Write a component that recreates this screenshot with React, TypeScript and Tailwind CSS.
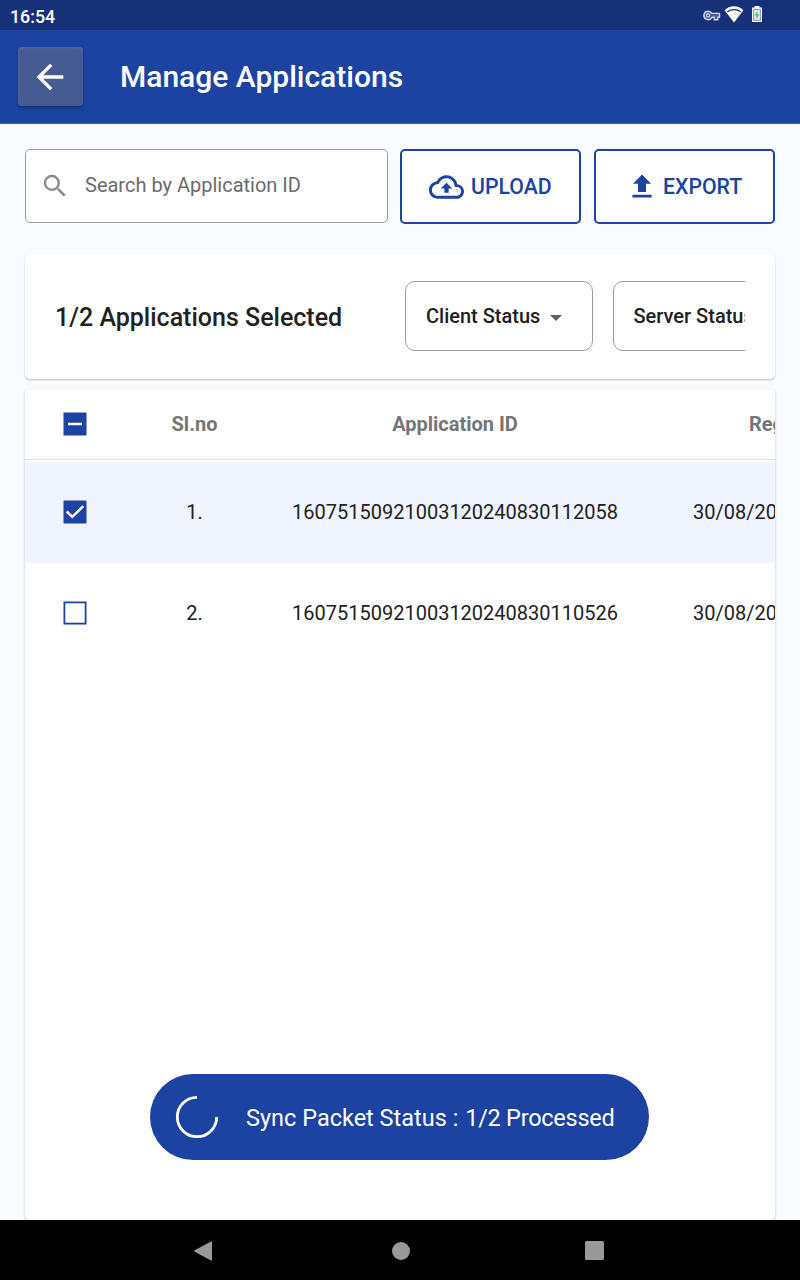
import type { ReactNode } from "react";

function StatusBar() {
  return (
    <div className="flex h-[30px] shrink-0 items-center justify-between bg-[#163178] pl-[10px] pr-[37px]">
      <span className="pt-[3px] text-[17.800px] font-medium leading-none text-white">16:54</span>
      <div className="flex h-[30px] items-start pt-[5px]">
        <svg width="18" height="12" viewBox="0 0 18 12" className="mt-[5px]">
          <path
            d="M5 1.200a4.200 4.200 0 1 0 3.900 6h2.300v2.500h3.600V7.200h1.700V3.400H8.900A4.200 4.200 0 0 0 5 1.200z"
            fill="#4a5e9a"
            stroke="#d0d6e8"
            strokeWidth="1.400"
            strokeLinejoin="round"
          />
          <circle cx="5" cy="5.400" r="1.500" fill="#163178" stroke="#e6eaf4" strokeWidth="1.100" />
        </svg>
        <svg width="20" height="18" viewBox="0 0 20 18" className="ml-[3px]">
          <path d="M10 17.400.6 5.200C3.200 2.700 6.400 1.200 10 1.200s6.800 1.500 9.400 4z" fill="#fff" />
          <path d="M3.300 6.900C5.200 5.400 7.500 4.600 10 4.600s4.800.8 6.700 2.300" fill="none" stroke="#163178" strokeWidth="1.300" />
        </svg>
        <svg width="12" height="18" viewBox="0 0 12 18" className="ml-[7px]">
          <path d="M3.500 1h5v1.500H11V17H1V2.500h2.500z" fill="#fff" />
          <rect x="2.600" y="4.300" width="6.800" height="11" fill="#dfe9ee" stroke="#7f8db5" strokeWidth=".9" />
          <path d="M6.800 5.500 3.400 10.400h2.200l-.5 4.200L8.600 9.300H6.400z" fill="#2edb62" />
        </svg>
      </div>
    </div>
  );
}

function Header() {
  return (
    <header className="flex h-[94px] shrink-0 items-center border-b border-[#3f60b0] bg-[#1c43a1] pl-[17.500px]">
      <button className="flex h-[59px] w-[65px] items-center justify-center rounded-[4px] bg-[#465b92] pr-[1px] shadow-[0_2px_3px_rgba(0,0,0,0.28),inset_0_2px_3px_rgba(80,105,175,0.8)]">
        <svg width="40" height="40" viewBox="0 0 24 24" fill="#fff">
          <path d="M20 11H7.830l5.590-5.590L12 4l-8 8 8 8 1.410-1.410L7.830 13H20v-2z" />
        </svg>
      </button>
      <h1 className="ml-[37.500px] text-[30px] font-medium leading-none text-white">Manage Applications</h1>
    </header>
  );
}

function ActionButton({ icon, label, className }: { icon: ReactNode; label: string; className: string }) {
  return (
    <button
      className={`flex h-[75px] w-[181px] items-center rounded-[5px] border-2 border-[#1c43a1] bg-white text-[21.250px] font-medium leading-none text-[#1c43a1] ${className}`}
    >
      {icon}
      <span className="whitespace-nowrap">{label}</span>
    </button>
  );
}

function Toolbar() {
  return (
    <div className="flex items-start">
      <div className="flex h-[73.500px] w-[363px] items-center rounded-[5px] border-[1.500px] border-[#9e9e9e] bg-white pl-[14px]">
        <svg width="30" height="30" viewBox="0 0 24 24" fill="#8c8c8c">
          <path d="M15.500 14h-.79l-.28-.27A6.471 6.471 0 0 0 16 9.500 6.500 6.500 0 1 0 9.500 16c1.610 0 3.090-.59 4.230-1.570l.27.28v.79l5 4.990L20.490 19l-4.990-5zm-6 0C7.010 14 5 11.990 5 9.500S7.010 5 9.500 5 14 7.010 14 9.500 11.990 14 9.500 14z" />
        </svg>
        <span className="ml-[15px] pb-[2px] text-[20px] leading-none text-[#6b6b6b]">Search by Application ID</span>
      </div>
      <ActionButton
        className="ml-[12px] gap-[7px] pl-[27px]"
        label="UPLOAD"
        icon={
          <svg width="35" height="24" viewBox="0 4 24 16" fill="#1c43a1">
            <path d="M19.350 10.040A7.490 7.490 0 0 0 12 4C9.110 4 6.600 5.640 5.350 8.040A5.994 5.994 0 0 0 0 14c0 3.310 2.690 6 6 6h13c2.760 0 5-2.240 5-5 0-2.640-2.050-4.780-4.650-4.960zM19 18H6c-2.210 0-4-1.790-4-4 0-2.050 1.530-3.760 3.560-3.970l1.070-.11.5-.95A5.469 5.469 0 0 1 12 6c2.620 0 4.880 1.860 5.390 4.430l.3 1.500 1.530.11A2.980 2.980 0 0 1 22 15c0 1.650-1.350 3-3 3z" />
            <path d="M8 13h2.550v3h2.900v-3H16l-4-4z" />
          </svg>
        }
      />
      <ActionButton
        className="ml-[13px] gap-[11px] pl-[36px]"
        label="EXPORT"
        icon={
          <svg width="20" height="24" viewBox="0 0 20 24" fill="#1c43a1" className="mb-[2px]">
            <path d="M10 .5 19 9.700h-5V18H6V9.700H1zM.4 20.800h19.200v2.700H.4z" />
          </svg>
        }
      />
    </div>
  );
}

function FilterButton({ label }: { label: string }) {
  return (
    <button className="flex h-[70px] w-[188px] shrink-0 items-center rounded-[10px] border border-[#9b9b9b] bg-white pl-[20px] text-[20px] font-medium leading-none text-[#212121]">
      <span className="whitespace-nowrap pb-[1px]">{label}</span>
      <svg width="12" height="6" viewBox="0 0 12 6" fill="#616161" className="ml-[10px] mt-[4px]">
        <path d="M0 0h12L6 6z" />
      </svg>
    </button>
  );
}

function SelectionCard() {
  return (
    <section className="mt-[30px] flex h-[125px] items-center rounded-[5px] bg-white pr-[30px] shadow-[0_1px_2px_rgba(0,0,0,0.25)]">
      <h2 className="w-[380px] shrink-0 pl-[30px] pt-[2px] text-[25px] font-medium leading-none text-[#212121]">
        1/2 Applications Selected
      </h2>
      <div className="flex min-w-0 flex-1 gap-[19.500px] overflow-hidden pb-[1px]">
        <FilterButton label="Client Status" />
        <FilterButton label="Server Status" />
      </div>
    </section>
  );
}

function Checkbox({ state }: { state: "mixed" | "on" | "off" }) {
  return (
    <svg width="24" height="24" viewBox="0 0 24 24">
      {state === "off" ? (
        <rect x="1.400" y="1.400" width="21.200" height="21.200" fill="#fff" stroke="#1c43a1" strokeWidth="1.800" />
      ) : (
        <rect x=".5" y=".5" width="23" height="23" fill="#1c43a1" />
      )}
      {state === "mixed" && <path d="M5 12h14" stroke="#fff" strokeWidth="2.500" />}
      {state === "on" && <path d="m3.700 11.500 5.600 5.300L20.300 6.200" fill="none" stroke="#fff" strokeWidth="2.500" />}
    </svg>
  );
}

const rows = [
  { no: "1.", id: "16075150921003120240830112058", date: "30/08/2024", selected: true },
  { no: "2.", id: "16075150921003120240830110526", date: "30/08/2024", selected: false },
];

const columns = "grid grid-cols-[100px_139px_382px_240px] items-center justify-items-center text-[20px] leading-none";

function ApplicationTable() {
  return (
    <section className="mt-[10px] flex min-h-0 flex-1 flex-col overflow-hidden rounded-[5px] bg-white shadow-[0_1px_3px_rgba(0,0,0,0.22)]">
      <div className={`${columns} h-[71px] shrink-0 border-b border-[#e4e4e4] font-bold text-[#757575]`}>
        <Checkbox state="mixed" />
        <span>Sl.no</span>
        <span>Application ID</span>
        <span className="justify-self-start whitespace-nowrap pl-[103px]">Reg. Date</span>
      </div>
      <div className="mt-[2px]">
        {rows.map((row) => (
          <div
            key={row.id}
            className={`${columns} h-[101px] pb-[2px] text-[#212121] ${row.selected ? "bg-[#f0f4ff]" : "bg-white"}`}
          >
            <Checkbox state={row.selected ? "on" : "off"} />
            <span>{row.no}</span>
            <span>{row.id}</span>
            <span className="justify-self-start pl-[47px]">{row.date}</span>
          </div>
        ))}
      </div>
    </section>
  );
}

function SyncToast() {
  return (
    <div className="absolute left-[150px] top-[1074px] flex h-[86px] w-[499px] items-center rounded-full bg-[#1c43a1] pl-[25px]">
      <svg width="44" height="44" viewBox="0 0 44 44" fill="none" stroke="#fff" strokeWidth="2.800">
        <path d="M22 2.300A19.700 19.700 0 1 0 41.700 22" />
      </svg>
      <span className="ml-[27px] whitespace-nowrap pt-[4px] text-[23.500px] leading-none text-white">
        Sync Packet Status : <span className="ml-[1px] tracking-[-0.250px]">1/2 Processed</span>
      </span>
    </div>
  );
}

function NavigationBar() {
  return (
    <nav className="flex h-[60px] shrink-0 items-center bg-black pl-[194px]">
      <svg width="18" height="20" viewBox="0 0 18 20" fill="#999" className="mt-[1px]">
        <path d="M17 .4q1-.5 1 .7v17.800q0 1.200-1 .7L.7 10.700q-1.200-.7 0-1.400z" />
      </svg>
      <div className="ml-[179.500px] mt-[1px] size-[18px] rounded-full bg-[#999]" />
      <div className="ml-[175.500px] mt-[1px] size-[19px] rounded-[1.500px] bg-[#999]" />
    </nav>
  );
}

export default function App() {
  return (
    <div className="relative flex h-[1280px] w-[800px] flex-col overflow-hidden bg-[#f8fbff] font-[Roboto,sans-serif]">
      <StatusBar />
      <Header />
      <main className="flex min-h-0 flex-1 flex-col px-[25px] pt-[25px]">
        <Toolbar />
        <SelectionCard />
        <ApplicationTable />
      </main>
      <NavigationBar />
      <SyncToast />
    </div>
  );
}
